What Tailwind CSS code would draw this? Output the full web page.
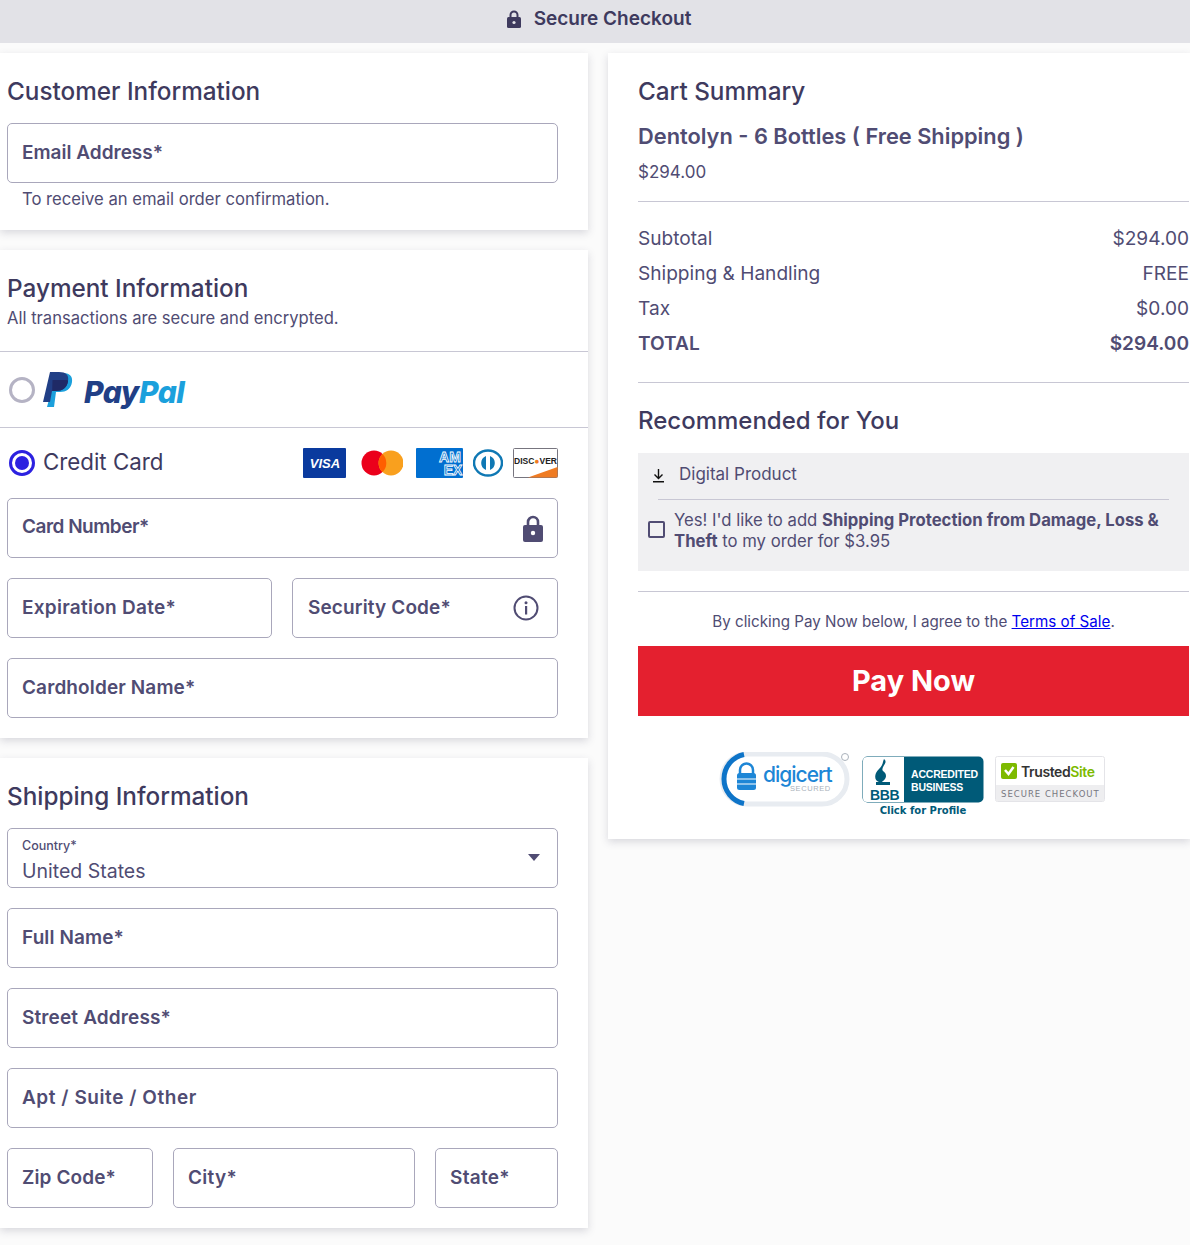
<!DOCTYPE html>
<html lang="en">
<head>
<meta charset="utf-8">
<title>Secure Checkout</title>
<script src="https://cdn.jsdelivr.net/npm/@tailwindcss/browser@4"></script>
</head>
<body class="m-0 h-[1245px] w-[1190px] overflow-hidden bg-[#fbfbfb] font-['Inter',sans-serif] text-[#504c73]">
<header class="flex h-[43px] items-center justify-center gap-[13px] bg-[#e2e2e7] pl-[8px] pb-[6px] pt-[1px]">
  <svg width="14" height="18" viewBox="0 0 14 18" class="mt-[-1px]"><path d="M3.500 8V5a3.500 3.500 0 0 1 7 0v3" fill="none" stroke="#3e3a5e" stroke-width="2"/><rect x="0" y="7" width="14" height="11" rx="1.500" fill="#3e3a5e"/><circle cx="7" cy="12.500" r="1.600" fill="#e2e2e7"/></svg>
  <span class="text-[19px] font-semibold text-[#3e3a5e]">Secure Checkout</span>
</header>
<main class="flex items-start gap-[20px] pt-[10px]">
  <div class="flex w-[588px] shrink-0 flex-col gap-[20px]">
    <section class="h-[177px] bg-white pl-[7px] pr-[30px] pt-[19px] shadow-[0_3px_8px_rgba(60,60,90,0.18)]">
      <h2 class="h-[36px] text-[24.300px] leading-[38px] font-medium text-[#3e3a5e]">Customer Information</h2>
      <div class="mt-[15px] flex h-[60px] items-center rounded-[5px] border border-[#a9a7bb] px-[14px] text-[19px] font-semibold">Email Address*</div>
      <p class="mt-[4px] pl-[15px] text-[16.650px] leading-[24px]">To receive an email order confirmation.</p>
    </section>
    <section class="h-[488px] bg-white pt-[19px] shadow-[0_3px_8px_rgba(60,60,90,0.18)]">
      <div class="pl-[7px]">
        <h2 class="h-[36px] text-[24.300px] leading-[38px] font-medium text-[#3e3a5e]">Payment Information</h2>
        <p class="mt-[3px] text-[16.600px] leading-[20px]">All transactions are secure and encrypted.</p>
      </div>
      <div class="mt-[23px] flex h-[77px] items-center gap-[8px] border-y border-[#c8c7d4] pl-[9px]">
        <span class="h-[26px] w-[26px] rounded-full border-[3px] border-[#b5b3c4] bg-white"></span>
        <svg width="30" height="36" viewBox="0 0 30 36"><path d="M13 1h7c6 0 10 3 9 9-1 7-6 10-12 10h-4l-2 15H4z" fill="#1ba0dc"/><path d="M7 0h9c7 0 10 3 9 9-1 7-6 10-12 10H9L7 30H0z" fill="#213f86"/><path d="M9.500 8h14c1 0 1.600 .5 1.500 1.500-1 6.500-6 9.500-12 9.500H9.200z" fill="#1f2a66"/></svg>
        <span class="ml-[3px] mt-[4px] text-[30px] leading-none font-extrabold tracking-[-0.5px] italic text-[#213f86]">Pay<span class="text-[#1ba0dc]">Pal</span></span>
      </div>
      <div class="flex h-[70px] items-center pl-[9px] pr-[30px]">
        <span class="flex h-[26px] w-[26px] items-center justify-center rounded-full border-[3px] border-[#2c21e0] bg-white"><span class="h-[14px] w-[14px] rounded-full bg-[#2c21e0]"></span></span>
        <span class="ml-[8px] mb-[2px] text-[22.300px] text-[#3e3a5e]">Credit Card</span>
        <div class="ml-auto flex items-center">
          <svg width="43" height="30" viewBox="0 0 43 30"><rect width="43" height="30" rx="1" fill="#0a3a9e"/><text x="22" y="20" text-anchor="middle" font-family="Liberation Sans" font-size="13" font-weight="700" font-style="italic" fill="#fff">VISA</text></svg>
          <svg width="42" height="26" viewBox="0 0 42 26" class="ml-[15px]"><circle cx="13" cy="13" r="12.500" fill="#eb001b"/><circle cx="30" cy="13" r="12.500" fill="#f9a01e"/><path d="M21.500 4a12.500 12.500 0 0 1 0 18 12.500 12.500 0 0 1 0-18z" fill="#ff5f00"/></svg>
          <svg width="47" height="30" viewBox="0 0 47 30" class="ml-[13px]"><rect width="47" height="30" rx="1" fill="#016fd0"/><text x="34" y="14" text-anchor="middle" font-family="Liberation Sans" font-size="14" font-weight="700" fill="#016fd0" stroke="#fff" stroke-width=".8">AM</text><text x="37" y="27" text-anchor="middle" font-family="Liberation Sans" font-size="14" font-weight="700" fill="#016fd0" stroke="#fff" stroke-width=".8">EX</text></svg>
          <svg width="30" height="28" viewBox="0 0 30 28" class="ml-[10px]"><ellipse cx="15" cy="14" rx="14" ry="12.500" fill="#fff" stroke="#0f78b4" stroke-width="2.500"/><path d="M13 7a7.500 7.500 0 0 0 0 14zM17 7a7.500 7.500 0 0 1 0 14z" fill="#0f78b4"/></svg>
          <svg width="45" height="30" viewBox="0 0 45 30" class="ml-[10px]"><rect x=".5" y=".5" width="44" height="29" rx="1" fill="#fff" stroke="#77757f"/><path d="M15 29.500 44.500 19v9.500a1 1 0 0 1-1 1z" fill="#ef7b22"/><text x="22.500" y="16" text-anchor="middle" font-family="Liberation Sans" font-size="8.500" font-weight="700" fill="#222">DISC<tspan fill="#ef7b22">●</tspan>VER</text></svg>
        </div>
      </div>
      <div class="flex flex-col gap-[20px] pl-[7px] pr-[30px]">
        <div class="flex h-[60px] items-center justify-between rounded-[5px] border border-[#a9a7bb] pl-[14px] pr-[14px] pb-[2px] text-[19px] tracking-[-0.5px] font-semibold">Card Number*
          <svg width="20" height="27" viewBox="0 0 20 27" class="mt-[2px]"><path d="M5 11V7a5 5 0 0 1 10 0v4" fill="none" stroke="#504c73" stroke-width="2.600"/><rect y="10" width="20" height="17" rx="2" fill="#504c73"/><circle cx="10" cy="18" r="2.200" fill="#fff"/></svg>
        </div>
        <div class="flex gap-[20px]">
          <div class="flex h-[60px] w-[265px] items-center rounded-[5px] border border-[#a9a7bb] px-[14px] text-[19px] tracking-[0.27px] font-semibold">Expiration Date*</div>
          <div class="flex h-[60px] flex-1 items-center justify-between rounded-[5px] border border-[#a9a7bb] pl-[15px] pr-[18px] text-[19px] tracking-[0.13px] font-semibold">Security Code*
            <svg width="26" height="26" viewBox="0 0 26 26"><circle cx="13" cy="13" r="11.500" fill="none" stroke="#504c73" stroke-width="2"/><rect x="12" y="11" width="2.200" height="8.500" fill="#504c73"/><circle cx="13" cy="7.700" r="1.500" fill="#504c73"/></svg>
          </div>
        </div>
        <div class="flex h-[60px] items-center rounded-[5px] border border-[#a9a7bb] px-[14px] text-[19px] tracking-[0.12px] font-semibold">Cardholder Name*</div>
      </div>
    </section>
    <section class="h-[470px] bg-white pl-[7px] pr-[30px] pt-[19px] shadow-[0_3px_8px_rgba(60,60,90,0.18)]">
      <h2 class="h-[36px] text-[24.300px] leading-[38px] font-medium text-[#3e3a5e]">Shipping Information</h2>
      <div class="mt-[15px] flex flex-col gap-[20px]">
        <div class="relative h-[60px] rounded-[5px] border border-[#a9a7bb] px-[14px] pt-[9px]">
          <div class="text-[12.500px] leading-[16px] font-medium">Country*</div>
          <div class="mt-[4px] text-[19.500px] leading-[26px]">United States</div>
          <span class="absolute right-[17px] top-[25px] h-0 w-0 border-x-[6.500px] border-t-[7px] border-x-transparent border-t-[#504c73]"></span>
        </div>
        <div class="flex h-[60px] items-center rounded-[5px] border border-[#a9a7bb] px-[14px] text-[19px] tracking-[0.1px] font-semibold">Full Name*</div>
        <div class="flex h-[60px] items-center rounded-[5px] border border-[#a9a7bb] px-[14px] text-[19px] tracking-[0.14px] font-semibold">Street Address*</div>
        <div class="flex h-[60px] items-center rounded-[5px] border border-[#a9a7bb] px-[14px] text-[19px] tracking-[0.55px] font-semibold">Apt / Suite / Other</div>
        <div class="flex gap-[20px]">
          <div class="flex h-[60px] w-[146px] items-center rounded-[5px] border border-[#a9a7bb] px-[14px] text-[19px] tracking-[0.1px] font-semibold">Zip Code*</div>
          <div class="flex h-[60px] w-[242px] items-center rounded-[5px] border border-[#a9a7bb] px-[14px] text-[19px] tracking-[0.3px] font-semibold">City*</div>
          <div class="flex h-[60px] flex-1 items-center rounded-[5px] border border-[#a9a7bb] px-[14px] text-[19px] tracking-[0.3px] font-semibold">State*</div>
        </div>
      </div>
    </section>
  </div>
  <aside class="h-[786px] w-[582px] shrink-0 bg-white pl-[30px] pr-[1px] pt-[19px] shadow-[0_3px_8px_rgba(60,60,90,0.18)]">
    <h2 class="h-[36px] text-[24.300px] leading-[38px] font-medium text-[#3e3a5e]">Cart Summary</h2>
    <h3 class="mt-[11px] h-[34px] text-[21.800px] leading-[34px] font-semibold">Dentolyn - 6 Bottles ( Free Shipping )</h3>
    <p class="mt-[6px] text-[17px] leading-[26px]">$294.00</p>
    <div class="mt-[16px] border-t border-[#c8c7d4]"></div>
    <dl class="mt-[19px] text-[19.100px]">
      <div class="flex h-[35px] items-center justify-between"><dt>Subtotal</dt><dd>$294.00</dd></div>
      <div class="flex h-[35px] items-center justify-between"><dt>Shipping &amp; Handling</dt><dd>FREE</dd></div>
      <div class="flex h-[35px] items-center justify-between"><dt>Tax</dt><dd>$0.00</dd></div>
      <div class="flex h-[35px] items-center justify-between font-semibold"><dt>TOTAL</dt><dd>$294.00</dd></div>
    </dl>
    <div class="mt-[21px] border-t border-[#c8c7d4]"></div>
    <h2 class="mt-[19px] h-[36px] text-[24px] leading-[38px] font-medium text-[#3e3a5e]">Recommended for You</h2>
    <div class="mt-[15px] h-[118px] bg-[#f0f0f2]">
      <div class="flex h-[46px] items-center pb-[2px] pl-[14px]">
        <svg width="13" height="15" viewBox="0 0 13 15"><path d="M6.500 1v9M2.500 6.500l4 4 4-4M1 13.700h11" fill="none" stroke="#111" stroke-width="1.400"/></svg>
        <span class="ml-[14px] text-[17px]">Digital Product</span>
      </div>
      <div class="mx-[20px] border-t border-[#c8c7d4]"></div>
      <div class="flex items-start pl-[10px] pr-[10px] pt-[10px]">
        <span class="mt-[11px] h-[17px] w-[17px] shrink-0 rounded-[2px] border-2 border-[#504c73]"></span>
        <p class="ml-[9px] text-[16.700px] leading-[20.500px]">Yes! I'd like to add <b class="font-bold">Shipping Protection from Damage, Loss &amp; Theft</b> to my order for $3.95</p>
      </div>
    </div>
    <div class="mt-[20px] border-t border-[#c8c7d4]"></div>
    <p class="mt-[19px] text-center text-[15.200px] leading-[22px]">By clicking Pay Now below, I agree to the <a href="#" class="text-[#0000ee] underline">Terms of Sale</a>.</p>
    <button class="mt-[13px] flex h-[70px] w-full items-center justify-center bg-[#e4202f] text-[29px] font-bold text-white">Pay Now</button>
    <div class="mt-[36px] flex items-start justify-center gap-[11px] pr-[3px]">
      <svg width="132" height="56" viewBox="0 0 132 56"><rect x="3" y="2" width="125" height="50" rx="25" fill="#fff" stroke="#e8ecf1" stroke-width="5"/><path d="M25 2.500A25 25 0 0 0 25 51.500" fill="none" stroke="#0e74c8" stroke-width="5"/><path d="M21 22v-4a6.500 6.500 0 0 1 13 0v4" fill="none" stroke="#1d86d6" stroke-width="2.500"/><rect x="18" y="21" width="19" height="17" rx="2.500" fill="#1d86d6"/><path d="M18 27h19M18 32h19" stroke="#fff"/><text x="44" y="30" font-family="Inter" font-size="21" font-weight="500" letter-spacing="-1" fill="#1d86d6">digicert</text><text x="71" y="39" font-family="Liberation Sans" font-size="7.500" letter-spacing=".6" fill="#aab2bb">SECURED</text><circle cx="126" cy="5" r="3.500" fill="#fff" stroke="#aab2bb"/></svg>
      <div class="mt-[4px] flex flex-col items-center">
        <svg width="122" height="47" viewBox="0 0 122 47"><rect x=".5" y=".5" width="121" height="46" rx="5" fill="#005a78"/><path d="M1 5a4 4 0 0 1 4-4h37v45H5a4 4 0 0 1-4-4z" fill="#fff"/><path d="M22 3c5 4-4 8-1 12 1 1 3 2 3 5 0 3-3 5-4 6h8v3H14v-3h3c-3-1-5-4-3-9 1-3 5-5 6-8 1-2 1-4 2-6z" fill="#005a78"/><text x="8" y="44" font-family="Liberation Sans" font-size="14" font-weight="700" letter-spacing="-.3" fill="#005a78">BBB</text><text x="49" y="22" font-family="Liberation Sans" font-size="10.500" font-weight="700" fill="#fff" letter-spacing="-.2">ACCREDITED</text><text x="49" y="35" font-family="Liberation Sans" font-size="10.500" font-weight="700" fill="#fff" letter-spacing="-.2">BUSINESS</text></svg>
        <span class="mt-[1px] font-['DejaVu_Sans'] text-[10px] leading-[14px] font-bold text-[#005a78]">Click for Profile</span>
      </div>
      <svg width="110" height="46" viewBox="0 0 110 46" class="mt-[4px]"><rect x=".5" y=".5" width="109" height="45" rx="2" fill="#fff" stroke="#e4e4e8"/><rect x="1" y="29" width="108" height="16" fill="#eeeef0"/><rect x="6" y="7" width="16" height="16" rx="2" fill="#7dba00"/><path d="M10 14l3.500 4 5-7" fill="none" stroke="#fff" stroke-width="2.500"/><text x="26" y="21" font-family="Inter" font-size="14" font-weight="600" letter-spacing="-.4" fill="#333">Trusted<tspan fill="#7dba00">Site</tspan></text><text x="6" y="41" font-family="DejaVu Sans" font-size="8.500" letter-spacing="1" fill="#77777f">SECURE CHECKOUT</text></svg>
    </div>
  </aside>
</main>
</body>
</html>
